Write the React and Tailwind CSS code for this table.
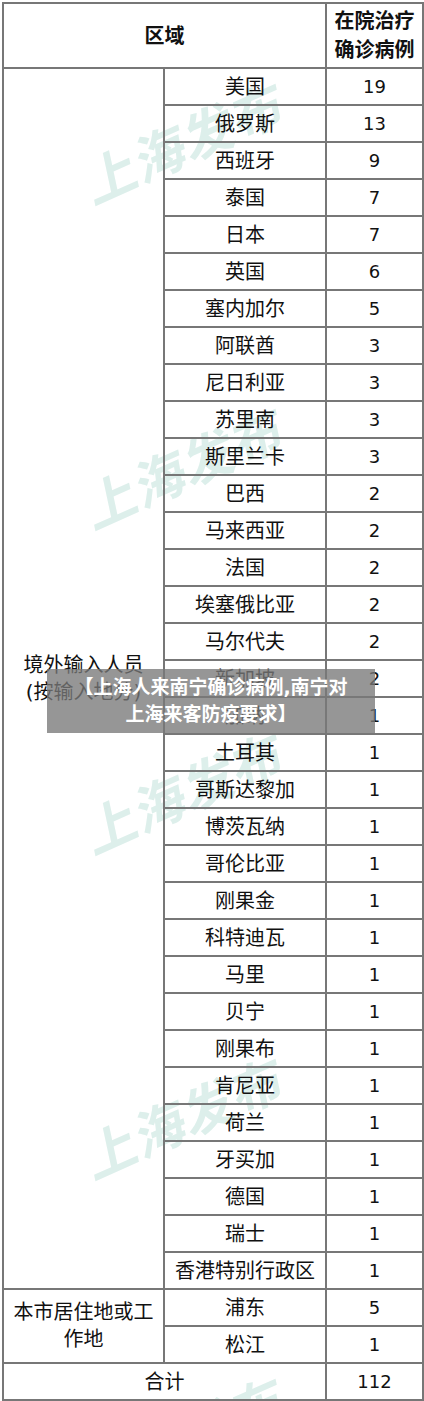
const rows = [
  ['美国', 19], ['俄罗斯', 13], ['西班牙', 9], ['泰国', 7], ['日本', 7], ['英国', 6],
  ['塞内加尔', 5], ['阿联酋', 3], ['尼日利亚', 3], ['苏里南', 3], ['斯里兰卡', 3],
  ['巴西', 2], ['马来西亚', 2], ['法国', 2], ['埃塞俄比亚', 2], ['马尔代夫', 2],
  ['新加坡', 2], ['加纳', 1], ['土耳其', 1], ['哥斯达黎加', 1], ['博茨瓦纳', 1],
  ['哥伦比亚', 1], ['刚果金', 1], ['科特迪瓦', 1], ['马里', 1], ['贝宁', 1],
  ['刚果布', 1], ['肯尼亚', 1], ['荷兰', 1], ['牙买加', 1], ['德国', 1], ['瑞士', 1],
  ['香港特别行政区', 1],
];

const local = [['浦东', 5], ['松江', 1]];

// watermark positions (top offsets)
const marks = [105, 430, 755, 1080, 1400];

const cell = 'border-2 border-[#777] text-center align-middle p-0';

export default function App() {
  return (
    <div
      className="relative w-[424px] h-[1401px] bg-white overflow-hidden text-[#111]"
      style={{ fontFamily: '"DejaVu Sans", "Noto Sans CJK SC", sans-serif' }}
    >
      {/* watermark */}
      {marks.map((t, i) => (
        <div
          key={i}
          className="absolute left-[80px] -rotate-[24deg] -skew-x-[12deg] text-[52px] font-bold tracking-[1px] text-[#ddefeb] whitespace-nowrap select-none pointer-events-none"
          style={{ top: t }}
        >
          上海发布
        </div>
      ))}

      <table className="relative ml-[2px] mt-[2px] w-[420px] table-fixed border-collapse text-[20px] leading-none">
        <colgroup>
          <col className="w-[161px]" />
          <col className="w-[162px]" />
          <col className="w-[97px]" />
        </colgroup>
        <tbody>
          <tr className="h-[65px]">
            <td colSpan={2} className={`${cell} font-bold`}>区域</td>
            <td className={`${cell} font-bold leading-[29px]`}>
              在院治疗<br />确诊病例
            </td>
          </tr>
          {rows.map(([name, n], i) => (
            <tr key={name} className="h-[37px]">
              {i === 0 && (
                <td rowSpan={rows.length} className={`${cell} leading-[27px]`}>
                  境外输入人员<br />(按输入地分)
                </td>
              )}
              <td className={cell}>{name}</td>
              <td className={`${cell} text-[18px]`}>{n}</td>
            </tr>
          ))}
          {local.map(([name, n], i) => (
            <tr key={name} className="h-[37px]">
              {i === 0 && (
                <td rowSpan={2} className={`${cell} leading-[27px]`}>
                  本市居住地或工<br />作地
                </td>
              )}
              <td className={cell}>{name}</td>
              <td className={`${cell} text-[18px]`}>{n}</td>
            </tr>
          ))}
          <tr className="h-[37px]">
            <td colSpan={2} className={cell}>合计</td>
            <td className={`${cell} text-[18px]`}>112</td>
          </tr>
        </tbody>
      </table>

      {/* caption overlay */}
      <div className="absolute left-[47px] top-[669px] w-[328px] h-[64px] bg-[rgba(120,120,120,0.78)] flex flex-col items-center justify-center text-white font-bold text-[19px] leading-[27px]">
        <div>【上海人来南宁确诊病例,南宁对</div>
        <div>上海来客防疫要求】</div>
      </div>
    </div>
  );
}
